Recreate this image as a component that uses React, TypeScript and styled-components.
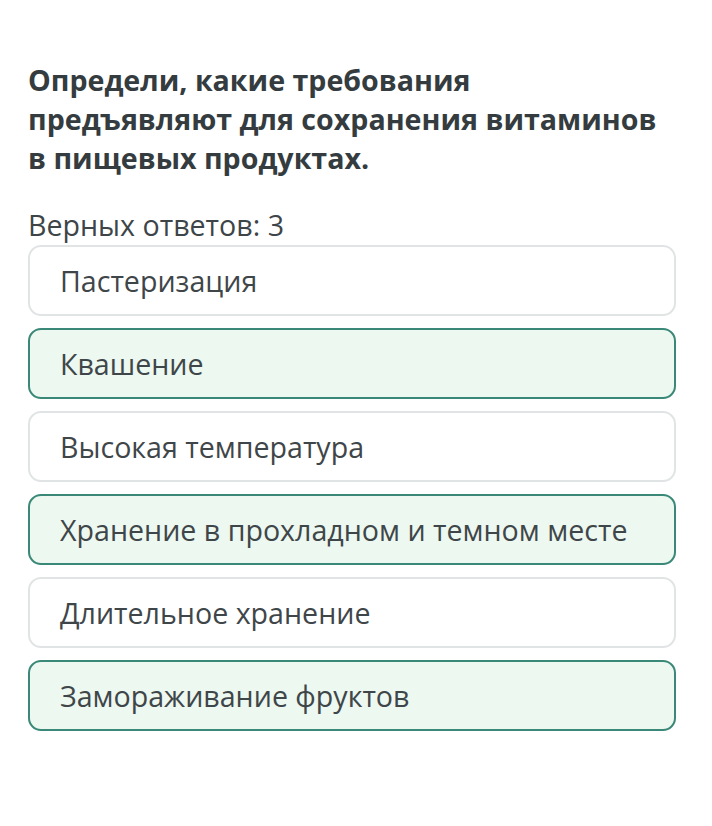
import React from "react";
import styled, { createGlobalStyle } from "styled-components";

const Global = createGlobalStyle`
  body { margin: 0; background: #ffffff; font-family: "Open Sans", "Noto Sans", sans-serif; }
`;

const Page = styled.div`
  padding: 60px 36px 0 28px;
`;

const Title = styled.h1`
  margin: 0;
  max-width: 645px;
  font-size: 28.6px;
  line-height: 39px;
  font-weight: 700;
  color: #343c40;
`;

const Count = styled.div`
  margin-top: 30px;
  font-size: 28.6px;
  line-height: 36px;
  color: #3d4548;
`;

const List = styled.div`
  display: flex;
  flex-direction: column;
  gap: 12px;
  margin-top: 2px;
`;

const Option = styled.div<{ $selected?: boolean }>`
  box-sizing: border-box;
  height: 71px;
  display: flex;
  align-items: center;
  padding-left: 30px;
  border-radius: 13px;
  border: 2px solid ${(p) => (p.$selected ? "#3a8877" : "#e1e4e5")};
  background: ${(p) => (p.$selected ? "#ecf8f0" : "#ffffff")};
  font-size: 28.6px;
  color: #3f4649;
`;

const options: { text: string; selected: boolean }[] = [
  { text: "Пастеризация", selected: false },
  { text: "Квашение", selected: true },
  { text: "Высокая температура", selected: false },
  { text: "Хранение в прохладном и темном месте", selected: true },
  { text: "Длительное хранение", selected: false },
  { text: "Замораживание фруктов", selected: true },
];

export default function App() {
  return (
    <>
      <Global />
      <Page>
        <Title>
          Определи, какие требования предъявляют для сохранения витаминов в пищевых продуктах.
        </Title>
        <Count>Верных ответов: 3</Count>
        <List>
          {options.map((o) => (
            <Option key={o.text} $selected={o.selected}>
              {o.text}
            </Option>
          ))}
        </List>
      </Page>
    </>
  );
}
